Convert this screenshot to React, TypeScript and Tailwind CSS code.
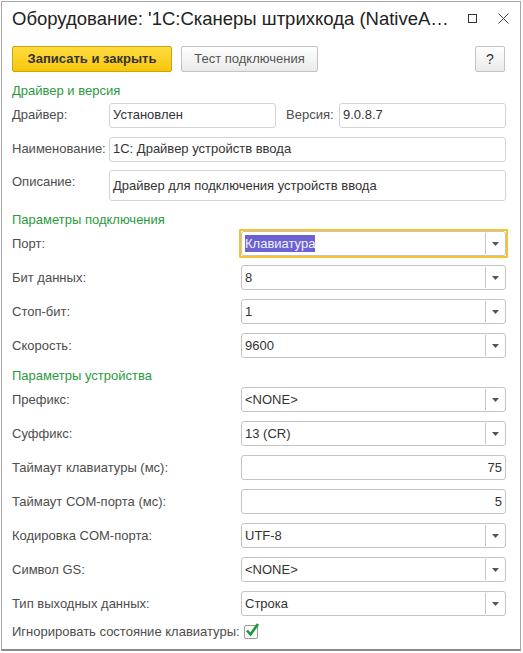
import React from "react";

const font = { fontFamily: '"Liberation Sans", Arial, sans-serif' };

const Arrow = () => (
  <svg width="7" height="4" viewBox="0 0 7 4">
    <path d="M0 0h7L3.5 4z" fill="#555" />
  </svg>
);

type FieldProps = {
  value: string;
  select?: boolean;
  right?: boolean;
  focused?: boolean;
  className?: string;
};

const Field = ({ value, select, right, focused, className }: FieldProps) => (
  <div
    className={
      "relative flex h-[25px] items-stretch rounded-[3px] border border-[#c4c4c4] bg-white " +
      (className ?? "")
    }
  >
    {focused && (
      <div className="pointer-events-none absolute -inset-[3px] rounded-[1px] border-2 border-[#f7c430]" />
    )}
    <div
      className={
        "flex flex-1 items-center px-[3px] text-[13px] text-[#333] " +
        (right ? "justify-end" : "")
      }
    >
      {focused ? (
        <span className="bg-[#6b62d2] leading-[17px] text-[#f4f0ff]">{value}</span>
      ) : (
        value
      )}
    </div>
    {select && (
      <div className="flex w-[20px] items-center justify-center border-l border-[#c4c4c4] my-[1px]">
        <Arrow />
      </div>
    )}
  </div>
);

const Heading = ({ children, className }: { children: React.ReactNode; className?: string }) => (
  <div className={"flex h-[16px] items-center text-[13px] text-[#2b9a3d] " + (className ?? "")}>
    {children}
  </div>
);

type RowProps = { label: string; children: React.ReactNode; className?: string };

const Row = ({ label, children, className }: RowProps) => (
  <div className={"flex items-center " + (className ?? "")}>
    <div className="w-[229px] shrink-0 text-[13px] text-[#4d4d4d]">{label}</div>
    <div className="flex-1">{children}</div>
  </div>
);

const App = () => {
  return (
    <div className="h-[653px] w-[523px] bg-white" style={font}>
      <div className="ml-[1px] mt-[1px] flex h-[650px] w-[520px] flex-col border border-[#a8a8a8] border-b-2 border-b-[#8c8c8c] pl-[10px] pr-[14px]">
        {/* title bar */}
        <div className="flex h-[33px] items-center">
          <div className="whitespace-nowrap text-[18.5px] text-[#222]">
            Оборудование: '1С:Сканеры штрихкода (NativeA…
          </div>
          <div className="ml-auto h-[9px] w-[9px] border border-[#333]" />
          <svg className="-mr-[3px] ml-[21px]" width="11" height="11" viewBox="0 0 11 11">
            <path d="M0.5 0.5l10 10M10.5 0.5l-10 10" stroke="#444" strokeWidth="1" />
          </svg>
        </div>

        {/* command bar */}
        <div className="mt-[11px] flex h-[26px] items-stretch">
          <button className="w-[160px] rounded-[2px] border border-[#c9a40e] bg-gradient-to-b from-[#ffdc3c] to-[#f7c600] text-[13px] font-bold text-[#333]">
            Записать и закрыть
          </button>
          <button className="ml-[9px] w-[137px] rounded-[2px] border border-[#c2c2c2] bg-gradient-to-b from-[#ffffff] to-[#eaeaea] text-[13px] text-[#555]">
            Тест подключения
          </button>
          <button className="ml-auto mr-[1px] w-[30px] rounded-[2px] border border-[#c2c2c2] bg-gradient-to-b from-[#ffffff] to-[#eaeaea] text-[14px] text-[#333]">
            ?
          </button>
        </div>

        {/* driver and version */}
        <Heading className="mt-[11px]">Драйвер и версия</Heading>
        <div className="mt-[4px] flex h-[24px] items-center">
          <div className="w-[97px] text-[13px] text-[#4d4d4d]">Драйвер:</div>
          <Field value="Установлен" className="h-[24px] w-[167px] border-[#d4d4d4]" />
          <div className="ml-[10px] w-[53px] text-[13px] text-[#4d4d4d]">Версия:</div>
          <Field value="9.0.8.7" className="h-[24px] flex-1 border-[#d4d4d4]" />
        </div>
        <div className="mt-[10px] flex h-[24px] items-center">
          <div className="w-[97px] text-[13px] text-[#4d4d4d]">Наименование:</div>
          <Field value="1С: Драйвер устройств ввода" className="h-[24px] flex-1 border-[#d4d4d4]" />
        </div>
        <div className="mt-[9px] flex h-[31px] items-start">
          <div className="w-[97px] pt-[2px] text-[13px] text-[#4d4d4d]">Описание:</div>
          <div className="flex h-[31px] flex-1 items-start rounded-[3px] border border-[#d4d4d4] px-[3px] pt-[5px] text-[13px] text-[#333]">
            Драйвер для подключения устройств ввода
          </div>
        </div>

        {/* connection */}
        <Heading className="mt-[11px]">Параметры подключения</Heading>
        <Row label="Порт:" className="mt-[3px]">
          <Field value="Клавиатура" select focused />
        </Row>
        <Row label="Бит данных:" className="mt-[9px]">
          <Field value="8" select />
        </Row>
        <Row label="Стоп-бит:" className="mt-[9px]">
          <Field value="1" select />
        </Row>
        <Row label="Скорость:" className="mt-[9px]">
          <Field value="9600" select />
        </Row>

        {/* device */}
        <Heading className="mt-[10px]">Параметры устройства</Heading>
        <Row label="Префикс:" className="mt-[3px]">
          <Field value="<NONE>" select />
        </Row>
        <Row label="Суффикс:" className="mt-[9px]">
          <Field value="13 (CR)" select />
        </Row>
        <Row label="Таймаут клавиатуры (мс):" className="mt-[9px]">
          <Field value="75" right />
        </Row>
        <Row label="Таймаут COM-порта (мс):" className="mt-[9px]">
          <Field value="5" right />
        </Row>
        <Row label="Кодировка COM-порта:" className="mt-[9px]">
          <Field value="UTF-8" select />
        </Row>
        <Row label="Символ GS:" className="mt-[9px]">
          <Field value="<NONE>" select />
        </Row>
        <Row label="Тип выходных данных:" className="mt-[9px]">
          <Field value="Строка" select />
        </Row>
        <div className="mt-[8px] flex h-[16px] items-center">
          <div className="text-[13px] text-[#4d4d4d]">Игнорировать состояние клавиатуры:</div>
          <div className="relative ml-[4px] h-[14px] w-[14px] rounded-[2px] border border-[#9a9a9a] bg-white">
            <svg width="15" height="15" viewBox="0 0 15 15" className="absolute -top-[4px] left-[0px]">
              <path d="M2 8.5l3.5 4L13 2" fill="none" stroke="#179a3a" strokeWidth="2.6" />
            </svg>
          </div>
        </div>
      </div>
    </div>
  );
};

export default App;
